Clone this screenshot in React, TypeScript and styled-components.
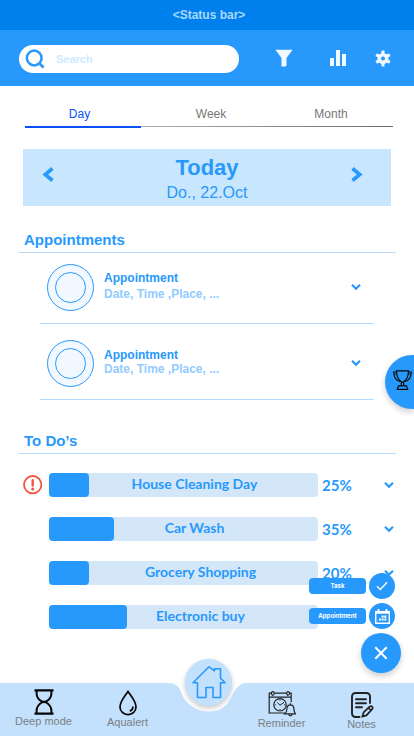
import React from 'react';
import styled, { createGlobalStyle, css } from 'styled-components';

const blue = '#2899fc';
const sans = '"Liberation Sans", Arial, sans-serif';

const GlobalStyle = createGlobalStyle`
  * { box-sizing: border-box; }
  body { margin: 0; background: #fff; font-family: ${sans}; }
  h1, h2, h3, p, ul { margin: 0; padding: 0; }
  ul { list-style: none; }
  button { border: 0; padding: 0; background: none; font: inherit; color: inherit; cursor: pointer; }
  svg { display: block; }
`;

const Page = styled.div`
  position: relative;
  display: flex;
  flex-direction: column;
  min-height: 100vh;
  overflow: hidden;
`;

const StatusBar = styled.div`
  height: 30px;
  padding-left: 4px;
  background: #0080ec;
  color: #a9d8ff;
  font-size: 12px;
  font-weight: bold;
  line-height: 30px;
  text-align: center;
`;

const Header = styled.header`
  display: flex;
  align-items: center;
  height: 56px;
  padding: 2px 23px 0 19px;
  background: ${blue};
`;

const SearchBox = styled.label`
  display: flex;
  align-items: center;
  flex: 1;
  gap: 11px;
  height: 28px;
  padding-left: 6px;
  border-radius: 14px;
  background: #fff;
`;

const SearchInput = styled.input`
  flex: 1;
  min-width: 0;
  border: 0;
  padding: 0;
  outline: 0;
  background: none;
  color: ${blue};
  font: bold 11px ${sans};
  &::placeholder { color: #cfe9ff; opacity: 1; }
`;

const HeaderActions = styled.div`
  display: flex;
  align-items: center;
  margin-left: 36px;
  padding-bottom: 2px;
  color: #f1f8ff;
`;

const IconButton = styled.button<{ $gap?: number }>`
  display: grid;
  place-items: center;
  margin-left: ${p => p.$gap ?? 0}px;
`;

const Tabs = styled.nav`
  display: grid;
  grid-template-columns: 109fr 154fr 86fr 19fr;
  margin: 18px 21px 0 25px;
`;

const Tab = styled.button<{ $active?: boolean }>`
  height: 20px;
  color: ${p => (p.$active ? '#0a53f5' : '#777')};
  font-size: 12px;
  line-height: 20px;
`;

const TabTrack = styled.div`
  display: flex;
  height: 2px;
  margin: 2px 21px 0 25px;
`;

const TabMarker = styled.div`
  flex: 116;
  background: #0a50fa;
`;

const TabRule = styled.div`
  flex: 252;
  height: 1px;
  background: linear-gradient(90deg, #b0b0b0, #6c6c6c);
`;

const DayCard = styled.section`
  display: flex;
  align-items: center;
  justify-content: space-between;
  height: 57px;
  margin: 21px 23px 0;
  padding: 0 28px 6px 19px;
  background: #c9e6ff;
  color: ${blue};
`;

const DayText = styled.div`
  padding: 10px 0 0 9px;
  text-align: center;
`;

const DayTitle = styled.h1`
  font-size: 22px;
  line-height: 26px;
`;

const DayDate = styled.p`
  font-size: 16px;
  line-height: 24px;
`;

const Section = styled.section<{ $top: number }>`
  margin: ${p => p.$top}px 18px 0 19px;
`;

const SectionTitle = styled.h2`
  height: 22px;
  padding-left: 5px;
  border-bottom: 1px solid #b5dcff;
  color: ${blue};
  font-size: 15px;
  line-height: 18px;
`;

const AppointmentList = styled.ul`
  margin: 0 22px 0 21px;
`;

const AppointmentItem = styled.li`
  display: flex;
  align-items: center;
  height: 76px;
  padding: 8px 13px 5px 7px;
  border-bottom: 1px solid #b5dcff;
  &:first-child { height: 71px; padding: 3px 13px 5px 7px; }
`;

const Avatar = styled.div`
  display: grid;
  place-items: center;
  width: 47px;
  height: 47px;
  border: 1px solid ${blue};
  border-radius: 50%;
  background: #f1f8ff;
  &::after {
    content: '';
    width: 29px;
    height: 29px;
    border: 1px solid ${blue};
    border-radius: 50%;
  }
`;

const AppointmentText = styled.div<{ $gap: number }>`
  display: grid;
  flex: 1;
  gap: ${p => p.$gap}px;
  padding: 0 0 2px 10px;
  font-size: 12px;
  font-weight: bold;
  line-height: 14px;
`;

const AppointmentName = styled.h3`
  color: ${blue};
  font-size: 12px;
`;

const AppointmentInfo = styled.p`
  color: #93cbff;
`;

const TodoList = styled.ul`
  display: grid;
  gap: 20px;
  padding: 19px 2px 0 4px;
`;

const TodoItem = styled.li`
  display: grid;
  grid-template-columns: 26px 1fr 66px 10px;
  align-items: center;
  height: 24px;
  color: ${blue};
  font-family: Lato, sans-serif;
  font-weight: bold;
`;

const AlertSlot = styled.div`
  height: 20px;
`;

const Bar = styled.div`
  display: grid;
  height: 24px;
  border-radius: 4px;
  background: #d3e7f8;
`;

const BarFill = styled.div`
  grid-area: 1 / 1;
  border-radius: 4px;
  background: ${blue};
`;

const BarLabel = styled.span<{ $inset: number }>`
  grid-area: 1 / 1;
  padding-left: ${p => p.$inset}px;
  font-size: 14px;
  line-height: 22px;
  text-align: center;
`;

const Percent = styled.span`
  padding-left: 4px;
  font-size: 15px;
  line-height: 24px;
`;

const round = css`
  display: grid;
  place-items: center;
  border-radius: 50%;
  background: ${blue};
  color: #fff;
`;

const TrophyButton = styled.button`
  position: absolute;
  top: 355px;
  right: 0;
  display: grid;
  place-items: center;
  width: 29px;
  height: 54px;
  padding: 0 0 4px 5px;
  border-radius: 27px 0 0 27px;
  background: ${blue};
  color: #0a0a0a;
  box-shadow: 0 3px 6px rgba(0, 0, 0, 0.2);
`;

const QuickActions = styled.div`
  position: absolute;
  right: 13px;
  bottom: 63px;
  display: grid;
  justify-items: end;
  gap: 4px;
`;

const QuickAction = styled.button`
  display: flex;
  align-items: center;
  gap: 3px;
  margin-right: 6px;
`;

const QuickLabel = styled.span`
  width: 57px;
  height: 16px;
  border-radius: 4px;
  background: ${blue};
  color: #fff;
  font: bold 6px/16px Inter, sans-serif;
  text-align: center;
`;

const QuickIcon = styled.span`
  ${round}
  width: 26px;
  height: 26px;
`;

const CloseButton = styled.button`
  ${round}
  width: 40px;
  height: 40px;
  box-shadow: 0 3px 6px rgba(0, 0, 0, 0.2);
`;

const BottomNav = styled.nav`
  display: grid;
  grid-template-columns: 87fr 81fr 80px 67fr 93fr;
  height: 53px;
  margin-top: auto;
  padding-right: 6px;
  background: #c3e0fc;
`;

const NavItem = styled.a<{ $top: number }>`
  display: flex;
  flex-direction: column;
  align-items: center;
  padding-top: ${p => p.$top}px;
  color: #7b7f84;
  font-size: 11px;
  line-height: 12px;
  text-decoration: none;
  white-space: nowrap;
`;

const HomeSlot = styled.div`
  position: relative;
`;

const HomeButton = styled.a`
  position: absolute;
  top: -24px;
  left: 17px;
  display: grid;
  place-items: center;
  width: 47px;
  height: 47px;
  padding-bottom: 2px;
  border-radius: 50%;
  background: #c3e0fc;
  box-shadow: 0 2px 5px rgba(0, 0, 0, 0.22);
`;

const SearchIcon = () => (
  <svg width="20" height="20" viewBox="0 0 20 20" fill="none" stroke={blue} strokeWidth="2.5">
    <circle cx="9.2" cy="9" r="7.4" />
    <path d="M14 14 18.6 18.4" strokeWidth="2.8" />
  </svg>
);

const FilterIcon = () => (
  <svg width="18" height="18" viewBox="0 0 18 18" fill="currentColor">
    <path d="M.4.8h17.2L11.5 9v7.4l-1.2 1.2H6.5V9z" />
  </svg>
);

const ChartIcon = () => (
  <svg width="16" height="16" viewBox="0 0 16 16" fill="currentColor">
    <path d="M0 8h4v8H0zM6 0h4v16H6zM12 4h4v12h-4z" />
  </svg>
);

const GearIcon = () => (
  <svg width="16" height="17" viewBox="0 0 16 17" stroke="currentColor">
    <circle cx="8" cy="8.500" r="3.800" fill="none" strokeWidth="3.600" />
    <path d="M8 .4v3.600M8 13v3.600M1.200 4.600l3.100 1.800M11.700 10.600l3.100 1.800M14.800 4.600l-3.100 1.800M4.300 10.600l-3.100 1.800" strokeWidth="3" />
  </svg>
);

const Arrow = ({ next }: { next?: boolean }) => (
  <svg width="12" height="15" viewBox="0 0 12 15" fill="none" stroke={blue} strokeWidth="3.6">
    <path d={next ? 'M1.5 1.5 8.8 7.5 1.5 13.5' : 'M10.5 1.5 3.2 7.5 10.5 13.5'} />
  </svg>
);

const Chevron = () => (
  <svg width="10" height="8" viewBox="0 0 10 8" fill="none" stroke={blue} strokeWidth="2.2">
    <path d="M1 1.800 5 5.700l4-3.900" />
  </svg>
);

const AlertIcon = () => (
  <svg width="20" height="20" viewBox="0 0 20 20" fill="none" stroke="#f5523f" strokeWidth="1.8">
    <circle cx="9.7" cy="9.700" r="8.7" />
    <path d="M9.7 5.300v5.200" strokeWidth="2.4" strokeLinecap="round" />
    <circle cx="9.7" cy="13.900" r="1.5" fill="#f5523f" stroke="none" />
  </svg>
);

const TrophyIcon = () => (
  <svg width="19" height="20" viewBox="0 0 19 20" fill="none" stroke="currentColor" strokeWidth="1.2">
    <path d="M3.500.8h12c0 5.800-1.800 9.700-6 11.700-4.200-2-6-5.900-6-11.700z" />
    <path d="M3.500 2H.7c.2 5.500 2.500 9 7 9.700M3.600 4.200h-1.200M15.500 2h2.800c-.2 5.500-2.500 9-7 9.700M15.400 4.200h1.200" />
    <path d="M8.300 12.500v3.200M10.700 12.500v3.200M4.300 19.300l1.200-3.500h8l1.200 3.500z" />
  </svg>
);

const CheckIcon = () => (
  <svg width="12" height="10" viewBox="0 0 12 10" fill="none" stroke="currentColor" strokeWidth="1.4">
    <path d="M1 5.300 4.300 8.500 11 1.300" />
  </svg>
);

const CalendarIcon = () => (
  <svg width="15" height="15" viewBox="0 0 15 15" fill="none" stroke="currentColor" strokeWidth="1.400">
    <path d="M.7 2.700h13.600v11.600H.7z" />
    <path d="M.7 3.500h13.600" strokeWidth="2.400" />
    <path d="M3.500 0v3M11.500 0v3" strokeWidth="1.800" />
    <path d="M6.600 7.600h2M9.300 7.600h2M3.900 10.500h2M6.600 10.500h2M9.300 10.500h2" strokeWidth="2.200" />
  </svg>
);

const CloseIcon = () => (
  <svg width="14" height="14" viewBox="0 0 14 14" fill="none" stroke="currentColor" strokeWidth="2">
    <path d="M1.300 1.300 12.700 12.700M12.700 1.300 1.300 12.700" />
  </svg>
);

const HourglassIcon = () => (
  <svg width="20" height="26" viewBox="0 0 20 26" fill="none" stroke="#050505" strokeWidth="2">
    <path d="M.5 1.300h19M.5 24.600h19" strokeWidth="2.200" />
    <path d="M2.600 2v2.500C2.600 9 5 11 8.500 13 5 15 2.600 17 2.600 21.500V24M17.400 2v2.500C17.400 9 15 11 11.500 13c3.500 2 5.900 4 5.900 8.500V24" />
    <path d="M7 12.900h6" strokeWidth="2.400" />
  </svg>
);

const DropIcon = () => (
  <svg width="20" height="26" viewBox="0 0 20 26" fill="none" stroke="#050505" strokeWidth="1.700">
    <path d="M10 1.500C7 6 2 11.500 2 17a8 7.700 0 0 0 16 0C18 11.500 13 6 10 1.500z" />
    <path d="M15 16.500c0 2.400-1.200 3.900-3.200 4.600" />
  </svg>
);

const ReminderIcon = () => (
  <svg width="28" height="26" viewBox="0 0 28 26" fill="none" stroke="#222" strokeWidth="1.200">
    <path d="M17 22H1.200V2.200h2M6.500 2.200h12M21.700 2.200h1.500v9M1.200 6.200h22" />
    <path d="M5 4.600C2.900 3.800 3 .7 4.800.7s1.900 2.700.5 3.600M20.200 4.600C18.100 3.800 18.200.7 20 .7s1.900 2.700.5 3.600" />
    <circle cx="12" cy="13.800" r="6.200" />
    <path d="m9.300 11.600 2.700 2.600 4-2.800M12 8.600v1M12 18v1M6.800 13.800h1M16.200 13.800h1" strokeWidth="1" />
    <path d="M17 22.800c1.700-1.200 1.700-2.700 1.900-5 .2-2.600 1.700-3.900 3.500-3.900s3.300 1.300 3.500 3.900c.2 2.300.2 3.800 1.600 5zM22.400 13.800v-1.500M20.700 23c.2 2.400 3.200 2.400 3.400 0" fill="#c3e0fc" />
  </svg>
);

const NotesIcon = () => (
  <svg width="24" height="26" viewBox="0 0 24 26" fill="none" stroke="#222" strokeWidth="1.900" strokeLinecap="round">
    <path d="M9.500 25H5.500a3.500 3.500 0 0 1-3.500-3.500V4.500A3.500 3.500 0 0 1 5.500 1h11A3.500 3.500 0 0 1 20 4.500V11" />
    <path d="M6 7.200h10M6 11.200h10M6 15.200h6" />
    <path d="m13.600 20.400 6-5.700c1.700-1.400 4 .6 2.600 2.500l-5.800 6.200-4 1.200zM18.500 16l2.500 2.400" strokeWidth="1.700" />
  </svg>
);

const HomeIcon = () => (
  <svg width="34" height="34" viewBox="0 0 34 34" fill="none" stroke={blue} strokeWidth="1.600" strokeLinejoin="round">
    <path d="M5.500 32.500V17.800H1L17 1.800l5.500 4V3.800h6v9.300l4.500 4.700h-4.500v14.700H21V22.500h-7v10z" />
  </svg>
);

const Notch = () => (
  <svg width="80" height="30" viewBox="0 0 80 30" fill="#fff">
    <path d="M0 0C7 0 11 3 13 9c4 12 15 19.500 28 19.500 10 0 16-4 20-10 5-7.500 7-18.500 18-18.500z" />
  </svg>
);

const appointments = [
  { id: 1, gap: 2 },
  { id: 2, gap: 0 },
];

const todos = [
  { name: 'House Cleaning Day', fill: 15, inset: 22, percent: '25%', urgent: true },
  { name: 'Car Wash', fill: 24, inset: 22, percent: '35%' },
  { name: 'Grocery Shopping', fill: 15, inset: 34, percent: '20%' },
  { name: 'Electronic buy', fill: 29, inset: 34 },
];

export default function App() {
  return (
    <Page>
      <GlobalStyle />
      <StatusBar>&lt;Status bar&gt;</StatusBar>
      <Header>
        <SearchBox>
          <SearchIcon />
          <SearchInput type="search" placeholder="Search" aria-label="Search" />
        </SearchBox>
        <HeaderActions>
          <IconButton aria-label="Filter"><FilterIcon /></IconButton>
          <IconButton $gap={37} aria-label="Statistics"><ChartIcon /></IconButton>
          <IconButton $gap={29} aria-label="Settings"><GearIcon /></IconButton>
        </HeaderActions>
      </Header>

      <Tabs>
        <Tab $active>Day</Tab>
        <Tab>Week</Tab>
        <Tab>Month</Tab>
      </Tabs>
      <TabTrack>
        <TabMarker />
        <TabRule />
      </TabTrack>

      <DayCard>
        <IconButton aria-label="Previous day"><Arrow /></IconButton>
        <DayText>
          <DayTitle>Today</DayTitle>
          <DayDate>Do., 22.Oct</DayDate>
        </DayText>
        <IconButton aria-label="Next day"><Arrow next /></IconButton>
      </DayCard>

      <Section $top={25}>
        <SectionTitle>Appointments</SectionTitle>
        <AppointmentList>
          {appointments.map(a => (
            <AppointmentItem key={a.id}>
              <Avatar />
              <AppointmentText $gap={a.gap}>
                <AppointmentName>Appointment</AppointmentName>
                <AppointmentInfo>Date, Time ,Place, ...</AppointmentInfo>
              </AppointmentText>
              <IconButton aria-label="Show appointment"><Chevron /></IconButton>
            </AppointmentItem>
          ))}
        </AppointmentList>
      </Section>

      <Section $top={32}>
        <SectionTitle>To Do’s</SectionTitle>
        <TodoList>
          {todos.map(t => (
            <TodoItem key={t.name}>
              <AlertSlot>{t.urgent && <AlertIcon />}</AlertSlot>
              <Bar>
                <BarFill style={{ width: `${t.fill}%` }} />
                <BarLabel $inset={t.inset}>{t.name}</BarLabel>
              </Bar>
              {t.percent && <Percent>{t.percent}</Percent>}
              {t.percent && <IconButton aria-label={`Show ${t.name}`}><Chevron /></IconButton>}
            </TodoItem>
          ))}
        </TodoList>
      </Section>

      <BottomNav>
        <NavItem href="#deep" $top={6}><HourglassIcon />Deep mode</NavItem>
        <NavItem href="#aqualert" $top={7}><DropIcon />Aqualert</NavItem>
        <HomeSlot>
          <Notch />
          <HomeButton href="#home" aria-label="Home"><HomeIcon /></HomeButton>
        </HomeSlot>
        <NavItem href="#reminder" $top={8}><ReminderIcon />Reminder</NavItem>
        <NavItem href="#notes" $top={9}><NotesIcon />Notes</NavItem>
      </BottomNav>

      <TrophyButton aria-label="Achievements"><TrophyIcon /></TrophyButton>
      <QuickActions>
        <QuickAction>
          <QuickLabel>Task</QuickLabel>
          <QuickIcon><CheckIcon /></QuickIcon>
        </QuickAction>
        <QuickAction>
          <QuickLabel>Appointment</QuickLabel>
          <QuickIcon><CalendarIcon /></QuickIcon>
        </QuickAction>
        <CloseButton aria-label="Close"><CloseIcon /></CloseButton>
      </QuickActions>
    </Page>
  );
}
